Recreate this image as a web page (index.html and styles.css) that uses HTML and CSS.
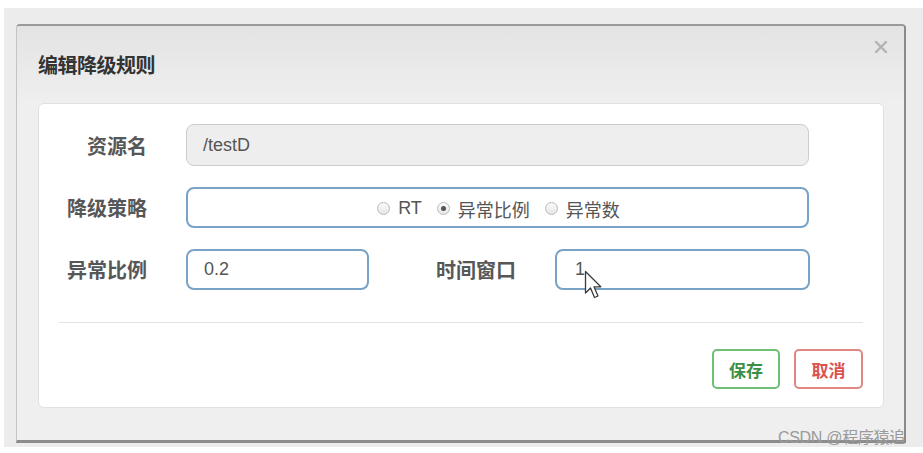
FILE: index.html
```html
<!DOCTYPE html>
<html lang="zh-CN">
<head>
    <meta charset="UTF-8">
    <meta name="viewport" content="width=device-width, initial-scale=1.0">
    <title>编辑降级规则</title>
    <link rel="stylesheet" href="styles.css">
</head>
<body>
    <div class="backdrop">
        <div class="modal">
            <div class="modal-header">
                <h4 class="modal-title">编辑降级规则</h4>
                <span class="close">
                    <svg width="14" height="14" viewBox="0 0 14 14">
                        <path d="M2 2 L12 12 M12 2 L2 12" stroke="#b3b3b3" stroke-width="2.4" stroke-linecap="round"/>
                    </svg>
                </span>
            </div>
            <div class="card">
                <div class="form-row">
                    <label class="label">资源名</label>
                    <div class="input disabled wide">/testD</div>
                </div>
                <div class="form-row">
                    <label class="label">降级策略</label>
                    <div class="input wide radios">
                        <span class="radio"></span><span class="radio-text">RT</span>
                        <span class="radio checked"></span><span class="radio-text">异常比例</span>
                        <span class="radio"></span><span class="radio-text last">异常数</span>
                    </div>
                </div>
                <div class="form-row">
                    <label class="label">异常比例</label>
                    <div class="input short">0.2</div>
                    <label class="label label-second">时间窗口</label>
                    <div class="input medium">1</div>
                </div>
                <div class="divider"></div>
                <div class="footer">
                    <button class="btn btn-save">保存</button>
                    <button class="btn btn-cancel">取消</button>
                </div>
            </div>
        </div>
    </div>

    <svg class="pointer" width="20" height="30" viewBox="0 0 20 30">
        <path d="M1.5 1.5 L1.5 23 L6.5 18 L10.5 27.5 L14 26 L10 16.8 L16.8 16.8 Z" fill="#fff" stroke="#3a3a3a" stroke-width="1.3" stroke-linejoin="round"/>
    </svg>

    <div class="watermark">CSDN @程序猿追</div>
</body>
</html>
```

FILE: styles.css
```css
/* Fondo general */
body {
    margin: 0;
    background: #fff;
    font-family: "Liberation Sans", "Noto Sans CJK SC", sans-serif;
    position: relative;
    height: 453px;
    overflow: hidden;
}

.backdrop {
    margin: 8px 0 0 4px;
    height: 439px;
    background: #ececec;
    padding: 16px 0 0 12px;
    box-sizing: border-box;
}

.modal {
    width: 890px;
    height: 419px;
    box-sizing: border-box;
    background: #efefef;
    border-top: 2px solid #9a9a9a;
    border-right: 2px solid #8a8a8a;
    border-bottom: 3px solid #8c8c8c;
    border-left: 1px solid #c4c4c4;
    border-radius: 4px 4px 0 0;
}

.modal-header {
    height: 77px;
    display: flex;
    justify-content: space-between;
    align-items: center;
    padding: 0 16px 0 21px;
    background: linear-gradient(#e3e3e3, #efefef);
    border-radius: 4px 4px 0 0;
}

.modal-title {
    margin: 0;
    font-size: 20px;
    font-weight: bold;
    color: #333;
    letter-spacing: -0.5px;
}

.close {
    align-self: flex-start;
    margin-top: 14px;
    line-height: 0;
}

.card {
    margin: 0 20px 0 21px;
    height: 305px;
    box-sizing: border-box;
    background: #fff;
    border: 1px solid #e0e0e0;
    border-radius: 6px;
    padding: 20px 20px 0 20px;
}

.form-row {
    display: flex;
    align-items: center;
    margin-bottom: 21px;
}

.label {
    width: 88px;
    margin-right: 39px;
    text-align: right;
    font-size: 20px;
    font-weight: bold;
    color: #575757;
    flex-shrink: 0;
}

.label-second {
    width: 147px;
    margin-right: 39px;
}

.input {
    height: 41px;
    box-sizing: border-box;
    border: 2px solid #78a2c6;
    border-radius: 8px;
    padding: 0 16px;
    display: flex;
    align-items: center;
    font-size: 18px;
    color: #555;
    background: #fff;
}

.disabled {
    height: 42px;
    background: #eee;
    border: 1px solid #ccc;
}

.wide {
    width: 623px;
}

.short {
    width: 183px;
}

.medium {
    width: 255px;
    padding-left: 18px;
}

.radios {
    justify-content: center;
    padding-left: 18px;
    padding-top: 2px;
}

.radio {
    width: 11px;
    height: 11px;
    border: 1px solid #bbb;
    border-radius: 50%;
    background: linear-gradient(#fafafa, #e6e6e6);
    position: relative;
    margin-right: 8px;
}

.radio.checked::after {
    content: "";
    position: absolute;
    left: 3px;
    top: 3px;
    width: 5px;
    height: 5px;
    border-radius: 50%;
    background: #555;
}

.radio-text {
    margin-right: 15px;
    color: #555;
}

.radio-text.last {
    margin-right: 0;
}

.divider {
    height: 1px;
    background: #e3e3e3;
    margin-top: 32px;
}

.footer {
    display: flex;
    justify-content: flex-end;
    margin-top: 26px;
}

.btn {
    height: 40px;
    width: 68px;
    background: #fff;
    border-radius: 5px;
    font-family: "Liberation Sans", "Noto Sans CJK SC", sans-serif;
    font-size: 17px;
    font-weight: 600;
    cursor: pointer;
    padding: 0;
}

.btn-save {
    border: 2px solid #6fbf76;
    color: #3c8f45;
    margin-right: 14px;
}

.btn-cancel {
    width: 69px;
    border: 2px solid #e08683;
    color: #d9534f;
}

/* Puntero del ratón sobre el campo */
.pointer {
    position: absolute;
    left: 584px;
    top: 270px;
}

.watermark {
    position: absolute;
    right: 18px;
    top: 424px;
    font-size: 16px;
    color: #9a9a9a;
    letter-spacing: -0.3px;
}
```
